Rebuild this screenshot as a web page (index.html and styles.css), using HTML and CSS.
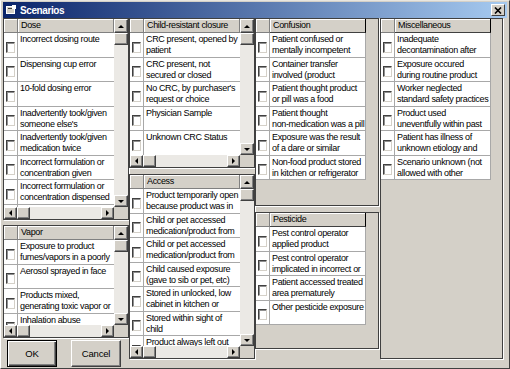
FILE: index.html
```html
<!DOCTYPE html>
<html lang="en">
<head>
  <meta charset="UTF-8" />
  <title>Scenarios</title>
  <link rel="stylesheet" href="styles.css">
</head>
<body>
  <div class="window">
    <div class="titlebar">
      <svg class="app-icon" width="11" height="10" viewBox="0 0 11 10">
        <rect x="0.5" y="1.5" width="8" height="7" fill="#d4d0c8" stroke="#fff"/>
        <rect x="2" y="3" width="5" height="1" fill="#404040"/>
        <rect x="6" y="0" width="4" height="4" fill="#fff"/>
      </svg>
      <span class="title">Scenarios</span>
      <span class="close-btn">
        <svg width="8" height="7" viewBox="0 0 8 7"><path d="M1 0.5 L7 6.5 M7 0.5 L1 6.5" stroke="#000" stroke-width="1.6"/></svg>
      </span>
    </div>

    <div class="content">
      <!-- column 1 -->
      <div class="column col-dose">
        <div class="panel scrolling dose">
          <div class="grid">
            <div class="grid-head"><div class="head-check"></div><div class="head-label">Dose</div></div>
            <div class="row"><div class="cell-check"><span class="checkbox"></span></div><div class="cell-text">Incorrect dosing route</div></div>
            <div class="row"><div class="cell-check"><span class="checkbox"></span></div><div class="cell-text">Dispensing cup error</div></div>
            <div class="row"><div class="cell-check"><span class="checkbox"></span></div><div class="cell-text">10-fold dosing error</div></div>
            <div class="row"><div class="cell-check"><span class="checkbox"></span></div><div class="cell-text">Inadvertently took/given<br>someone else's<br>medication</div></div>
            <div class="row"><div class="cell-check"><span class="checkbox"></span></div><div class="cell-text">Inadvertently took/given<br>medication twice</div></div>
            <div class="row"><div class="cell-check"><span class="checkbox"></span></div><div class="cell-text">Incorrect formulation or<br>concentration given</div></div>
            <div class="row"><div class="cell-check"><span class="checkbox"></span></div><div class="cell-text">Incorrect formulation or<br>concentration dispensed</div></div>
            <div class="row"><div class="cell-check"><span class="checkbox"></span></div><div class="cell-text">Other dosing error</div></div>
          </div>
          <div class="vscroll"><span class="sb-btn"><i class="arrow-up"></i></span><span class="sb-btn thumb"></span><span class="track"></span><span class="sb-btn"><i class="arrow-down"></i></span></div>
          <div class="hscroll"><span class="sb-btn"><i class="arrow-left"></i></span><span class="sb-btn thumb"></span><span class="track"></span><span class="sb-btn"><i class="arrow-right"></i></span></div>
          <div class="corner"></div>
        </div>

        <div class="panel scrolling vapor">
          <div class="grid">
            <div class="grid-head"><div class="head-check"></div><div class="head-label">Vapor</div></div>
            <div class="row"><div class="cell-check"><span class="checkbox"></span></div><div class="cell-text">Exposure to product<br>fumes/vapors in a poorly<br>ventilated area</div></div>
            <div class="row"><div class="cell-check"><span class="checkbox"></span></div><div class="cell-text">Aerosol sprayed in face</div></div>
            <div class="row"><div class="cell-check"><span class="checkbox"></span></div><div class="cell-text">Products mixed,<br>generating toxic vapor or<br>gas</div></div>
            <div class="row"><div class="cell-check"><span class="checkbox"></span></div><div class="cell-text">Inhalation abuse</div></div>
          </div>
          <div class="vscroll"><span class="sb-btn"><i class="arrow-up"></i></span><span class="sb-btn thumb"></span><span class="track"></span><span class="sb-btn"><i class="arrow-down"></i></span></div>
          <div class="hscroll"><span class="sb-btn"><i class="arrow-left"></i></span><span class="sb-btn thumb"></span><span class="track"></span><span class="sb-btn"><i class="arrow-right"></i></span></div>
          <div class="corner"></div>
        </div>

        <div class="buttons">
          <button class="btn btn-default">OK</button>
          <button class="btn">Cancel</button>
        </div>
      </div>

      <!-- column 2 -->
      <div class="column col-child">
        <div class="panel scrolling child">
          <div class="grid">
            <div class="grid-head"><div class="head-check"></div><div class="head-label">Child-resistant closure</div></div>
            <div class="row"><div class="cell-check"><span class="checkbox"></span></div><div class="cell-text">CRC present, opened by<br>patient</div></div>
            <div class="row"><div class="cell-check"><span class="checkbox"></span></div><div class="cell-text">CRC present, not<br>secured or closed</div></div>
            <div class="row"><div class="cell-check"><span class="checkbox"></span></div><div class="cell-text">No CRC, by purchaser's<br>request or choice</div></div>
            <div class="row"><div class="cell-check"><span class="checkbox"></span></div><div class="cell-text">Physician Sample</div></div>
            <div class="row"><div class="cell-check"><span class="checkbox"></span></div><div class="cell-text">Unknown CRC Status</div></div>
          </div>
          <div class="vscroll"><span class="sb-btn"><i class="arrow-up"></i></span><span class="sb-btn thumb"></span><span class="track"></span><span class="sb-btn"><i class="arrow-down"></i></span></div>
          <div class="hscroll"><span class="sb-btn"><i class="arrow-left"></i></span><span class="sb-btn thumb"></span><span class="track"></span><span class="sb-btn"><i class="arrow-right"></i></span></div>
          <div class="corner"></div>
        </div>

        <div class="panel scrolling access">
          <div class="grid">
            <div class="grid-head"><div class="head-check"></div><div class="head-label">Access</div></div>
            <div class="row"><div class="cell-check"><span class="checkbox"></span></div><div class="cell-text">Product temporarily open<br>because product was in<br>use</div></div>
            <div class="row"><div class="cell-check"><span class="checkbox"></span></div><div class="cell-text">Child or pet accessed<br>medication/product from<br>purse</div></div>
            <div class="row"><div class="cell-check"><span class="checkbox"></span></div><div class="cell-text">Child or pet accessed<br>medication/product from<br>counter</div></div>
            <div class="row"><div class="cell-check"><span class="checkbox"></span></div><div class="cell-text">Child caused exposure<br>(gave to sib or pet, etc)</div></div>
            <div class="row"><div class="cell-check"><span class="checkbox"></span></div><div class="cell-text">Stored in unlocked, low<br>cabinet in kitchen or<br>bathroom</div></div>
            <div class="row"><div class="cell-check"><span class="checkbox"></span></div><div class="cell-text">Stored within sight of<br>child</div></div>
            <div class="row"><div class="cell-check"><span class="checkbox"></span></div><div class="cell-text">Product always left out</div></div>
          </div>
          <div class="vscroll"><span class="sb-btn"><i class="arrow-up"></i></span><span class="sb-btn thumb"></span><span class="track"></span><span class="sb-btn"><i class="arrow-down"></i></span></div>
          <div class="hscroll"><span class="sb-btn"><i class="arrow-left"></i></span><span class="sb-btn thumb"></span><span class="track"></span><span class="sb-btn"><i class="arrow-right"></i></span></div>
          <div class="corner"></div>
        </div>
      </div>

      <!-- column 3 -->
      <div class="column col-confusion">
        <div class="panel confusion">
          <div class="grid">
            <div class="grid-head"><div class="head-check"></div><div class="head-label">Confusion</div></div>
            <div class="row"><div class="cell-check"><span class="checkbox"></span></div><div class="cell-text">Patient confused or<br>mentally incompetent</div></div>
            <div class="row"><div class="cell-check"><span class="checkbox"></span></div><div class="cell-text">Container transfer<br>involved (product<br>transferred to container)</div></div>
            <div class="row"><div class="cell-check"><span class="checkbox"></span></div><div class="cell-text">Patient thought product<br>or pill was a food</div></div>
            <div class="row"><div class="cell-check"><span class="checkbox"></span></div><div class="cell-text">Patient thought<br>non-medication was a pill</div></div>
            <div class="row"><div class="cell-check"><span class="checkbox"></span></div><div class="cell-text">Exposure was the result<br>of a dare or similar<br>challenge</div></div>
            <div class="row"><div class="cell-check"><span class="checkbox"></span></div><div class="cell-text">Non-food product stored<br>in kitchen or refrigerator</div></div>
          </div>
        </div>

        <div class="panel pesticide">
          <div class="grid">
            <div class="grid-head"><div class="head-check"></div><div class="head-label">Pesticide</div></div>
            <div class="row"><div class="cell-check"><span class="checkbox"></span></div><div class="cell-text">Pest control operator<br>applied product</div></div>
            <div class="row"><div class="cell-check"><span class="checkbox"></span></div><div class="cell-text">Pest control operator<br>implicated in incorrect or<br>improper application</div></div>
            <div class="row"><div class="cell-check"><span class="checkbox"></span></div><div class="cell-text">Patient accessed treated<br>area prematurely</div></div>
            <div class="row"><div class="cell-check"><span class="checkbox"></span></div><div class="cell-text">Other pesticide exposure</div></div>
          </div>
        </div>
      </div>

      <!-- column 4 -->
      <div class="column col-misc">
        <div class="panel misc">
          <div class="grid">
            <div class="grid-head"><div class="head-check"></div><div class="head-label">Miscellaneous</div></div>
            <div class="row"><div class="cell-check"><span class="checkbox"></span></div><div class="cell-text">Inadequate<br>decontamination after<br>exposure</div></div>
            <div class="row"><div class="cell-check"><span class="checkbox"></span></div><div class="cell-text">Exposure occured<br>during routine product<br>use</div></div>
            <div class="row"><div class="cell-check"><span class="checkbox"></span></div><div class="cell-text">Worker neglected<br>standard safety practices</div></div>
            <div class="row"><div class="cell-check"><span class="checkbox"></span></div><div class="cell-text">Product used<br>uneventfully within past<br>year</div></div>
            <div class="row"><div class="cell-check"><span class="checkbox"></span></div><div class="cell-text">Patient has illness of<br>unknown etiology and<br>symptoms</div></div>
            <div class="row"><div class="cell-check"><span class="checkbox"></span></div><div class="cell-text">Scenario unknown (not<br>allowed with other<br>scenarios)</div></div>
          </div>
        </div>
      </div>
    </div>
  </div>
</body>
</html>
```

FILE: styles.css
```css
body {
  margin: 0;
  font-family: "Liberation Sans", Arial, sans-serif;
  font-size: 9px;
  letter-spacing: -0.35px;
  color: #000;
}

.window {
  width: 510px;
  height: 369px;
  box-sizing: border-box;
  background: #d4d0c8;
  border-top: 1px solid #e8e6e0;
  border-left: 1px solid #fff;
  border-right: 1px solid #404040;
  border-bottom: 1px solid #404040;
  padding: 1px 2px 0 2px;
}

/* title bar */
.titlebar {
  height: 16px;
  display: flex;
  align-items: center;
  background: linear-gradient(to right, #0a246a, #a6caf0);
  padding: 0 2px 0 3px;
}

.app-icon {
  flex-shrink: 0;
}

.title {
  color: #fff;
  font-weight: bold;
  font-size: 10px;
  letter-spacing: -0.4px;
  margin-left: 3px;
}

.close-btn {
  margin-left: auto;
  width: 14px;
  height: 12px;
  box-sizing: border-box;
  background: #d4d0c8;
  border: 1px solid;
  border-color: #fff #404040 #404040 #fff;
  display: flex;
  align-items: center;
  justify-content: center;
}

/* layout */
.content {
  display: flex;
}

.column {
  display: flex;
  flex-direction: column;
  flex-shrink: 0;
}

.col-dose,
.col-child {
  width: 126px;
}

.col-confusion {
  width: 124px;
  margin-right: 1px;
}

.col-misc {
  width: 123px;
}

/* panels */
.panel {
  box-sizing: border-box;
  border: 1px solid #404040;
  box-shadow: 1px 1px 0 #fff;
  overflow: hidden;
}

.panel.scrolling {
  display: grid;
  grid-template-columns: 1fr 14px;
  grid-template-rows: 1fr 12px;
}

.dose { height: 202px; }
.vapor { height: 113px; margin-top: 5px; }
.child { height: 150px; }
.access { height: 185px; margin-top: 6px; }
.confusion { height: 188px; }
.pesticide { height: 137px; margin-top: 6px; }
.misc { height: 341px; }

.grid {
  overflow: hidden;
  min-height: 0;
}

.panel:not(.scrolling) .grid {
  width: 110px;
}

.grid-head {
  display: flex;
  height: 14px;
}

.head-check,
.head-label {
  box-sizing: border-box;
  background: #d4d0c8;
  border-right: 1px solid #808080;
  border-bottom: 1px solid #808080;
  box-shadow: inset 1px 1px 0 #fff;
}

.head-check {
  width: 14px;
  flex-shrink: 0;
}

.head-label {
  flex: 1;
  padding-left: 3px;
  line-height: 13px;
  white-space: nowrap;
  overflow: hidden;
}

.panel:not(.scrolling) .head-label {
  border-right-color: #000;
  border-bottom-color: #404040;
}

.row {
  display: flex;
  height: 24.5px;
  box-sizing: border-box;
  background: #fff;
  border-bottom: 1px solid #a8a8a8;
}

.panel:not(.scrolling) .row {
  border-right: 1px solid #a8a8a8;
}

.cell-check {
  width: 14px;
  flex-shrink: 0;
  box-sizing: border-box;
  border-right: 1px solid #a8a8a8;
  display: flex;
  justify-content: center;
  align-items: center;
  padding-top: 5px;
}

.checkbox {
  width: 9px;
  height: 11px;
  box-sizing: border-box;
  background: #fff;
  border-top: 1px solid #404040;
  border-left: 1px solid #404040;
  border-right: 1px solid #d4d0c8;
  border-bottom: 1px solid #d4d0c8;
  box-shadow: inset 1px 1px 0 #909090;
}

.cell-text {
  flex: 1;
  min-width: 0;
  padding: 1px 0 0 2px;
  line-height: 11px;
  white-space: nowrap;
  overflow: hidden;
}

/* scrollbars */
.vscroll,
.hscroll {
  display: flex;
  background: #ebe9e5;
}

.vscroll {
  flex-direction: column;
}

.sb-btn {
  box-sizing: border-box;
  background: #d4d0c8;
  border: 1px solid;
  border-color: #fff #404040 #404040 #fff;
  box-shadow: inset -1px -1px 0 #808080;
  display: flex;
  align-items: center;
  justify-content: center;
  flex-shrink: 0;
}

.vscroll .sb-btn { height: 14px; }
.vscroll .sb-btn:last-child { height: 12px; }
.vscroll .thumb { height: 12px; }
.hscroll .sb-btn { width: 13px; }
.hscroll .thumb { width: 13px; }

.track {
  flex: 1;
}

.corner {
  background: #d4d0c8;
}

.arrow-up,
.arrow-down,
.arrow-left,
.arrow-right {
  width: 0;
  height: 0;
}

.arrow-up {
  border-left: 3px solid transparent;
  border-right: 3px solid transparent;
  border-bottom: 3px solid #000;
}

.arrow-down {
  border-left: 3px solid transparent;
  border-right: 3px solid transparent;
  border-top: 3px solid #000;
}

.arrow-left {
  border-top: 3px solid transparent;
  border-bottom: 3px solid transparent;
  border-right: 3px solid #000;
}

.arrow-right {
  border-top: 3px solid transparent;
  border-bottom: 3px solid transparent;
  border-left: 3px solid #000;
}

/* dialog buttons */
.buttons {
  display: flex;
  gap: 14px;
  margin-top: 2px;
  padding-left: 4px;
}

.btn {
  width: 50px;
  height: 27px;
  box-sizing: border-box;
  background: #d4d0c8;
  border: 1px solid;
  border-color: #fff #404040 #404040 #fff;
  box-shadow: inset -1px -1px 0 #808080;
  font-family: "Liberation Sans", Arial, sans-serif;
  font-size: 9.5px;
  letter-spacing: -0.2px;
  color: #000;
  padding: 0;
}

.btn-default {
  border-color: #000;
  box-shadow: inset 1px 1px 0 #fff, inset -1px -1px 0 #404040, inset -2px -2px 0 #808080;
}
```
